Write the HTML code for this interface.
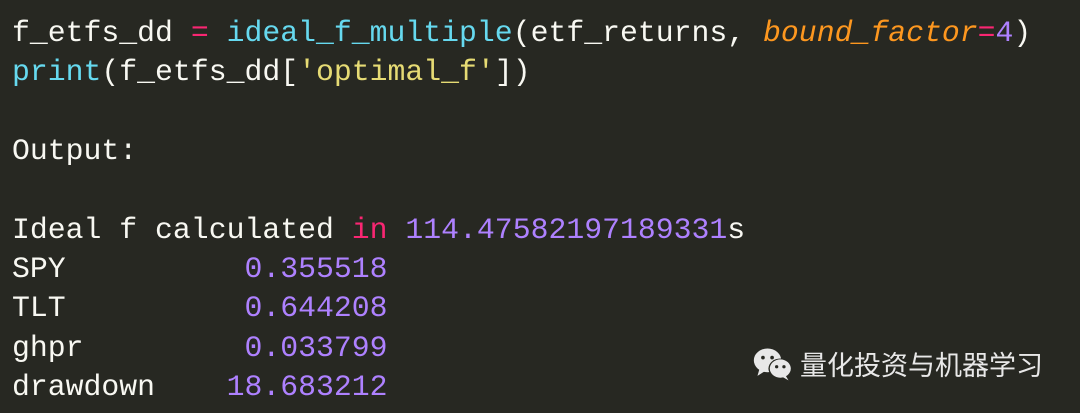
<!DOCTYPE html>
<html><head><meta charset="utf-8"><style>
html,body{margin:0;padding:0;background:#272822;width:1080px;height:413px;overflow:hidden}
pre{position:absolute;left:12px;top:14px;margin:0;font-family:"Liberation Mono",monospace;font-size:29.8px;line-height:39.35px;color:#f8f8f2}
.p{color:#f92672}.b{color:#66d9ef}.o{color:#fd971f;font-style:italic}.n{color:#ae81ff}.y{color:#e6db74}
.wm{position:absolute;left:752px;top:344px;display:flex;align-items:center;color:#e8e8e8;font-family:"Liberation Sans","Noto Sans CJK SC",sans-serif;font-size:27px}
</style></head><body>
<pre>f_etfs_dd <span class="p">=</span> <span class="b">ideal_f_multiple</span>(etf_returns, <span class="o">bound_factor</span><span class="p">=</span><span class="n">4</span>)
<span class="b">print</span>(f_etfs_dd[<span class="y">'optimal_f'</span>])

Output:

Ideal f calculated <span class="p">in</span> <span class="n">114.47582197189331</span>s
SPY          <span class="n">0.355518</span>
TLT          <span class="n">0.644208</span>
ghpr         <span class="n">0.033799</span>
drawdown    <span class="n">18.683212</span></pre>
<div class="wm"><svg width="42" height="36" viewBox="0 0 46 38"><ellipse cx="17" cy="15" rx="15" ry="13" fill="#e8e8e8"/><path d="M8 25 L6 32 L14 27Z" fill="#e8e8e8"/><circle cx="12" cy="12" r="2" fill="#272822"/><circle cx="22" cy="12" r="2" fill="#272822"/><ellipse cx="31" cy="24" rx="13" ry="11" fill="#272822"/><ellipse cx="31" cy="24" rx="11.5" ry="10" fill="#e8e8e8"/><path d="M37 32 L40 37 L33 33Z" fill="#e8e8e8"/><circle cx="27" cy="22" r="1.8" fill="#272822"/><circle cx="35" cy="22" r="1.8" fill="#272822"/></svg><span style="margin-left:6px">量化投资与机器学习</span></div>
</body></html>
